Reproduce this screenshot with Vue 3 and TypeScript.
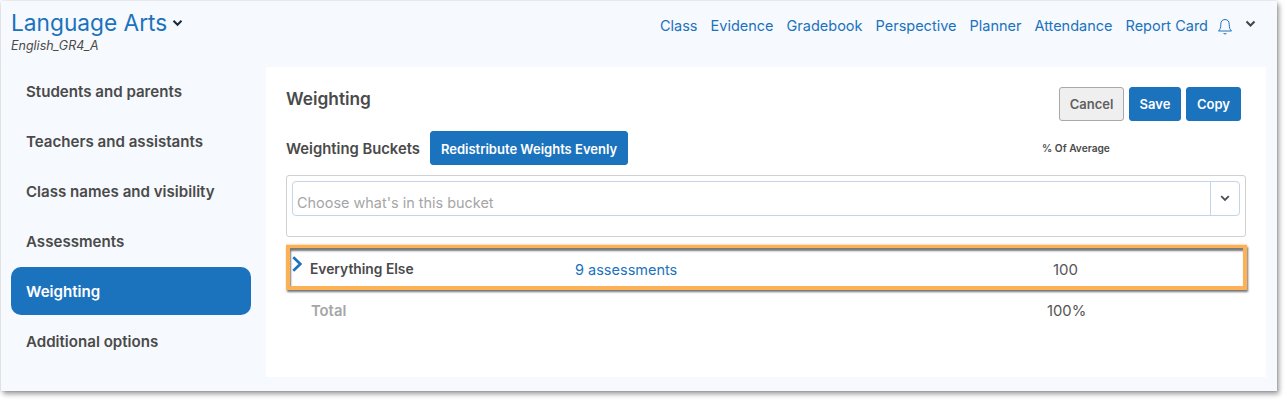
<script setup lang="ts">
const navLinks: string[] = ['Class', 'Evidence', 'Gradebook', 'Perspective', 'Planner', 'Attendance', 'Report Card']
const sideItems: string[] = ['Students and parents', 'Teachers and assistants', 'Class names and visibility', 'Assessments', 'Weighting', 'Additional options']
</script>

<template>
  <div class="stage">
    <div class="window">
      <header class="top">
        <div class="title-block">
          <div class="title-line">
            <span class="title">Language Arts</span>
            <svg class="title-caret" width="11" height="8" viewBox="0 0 11 8"><path d="M1.500 1.800 5.500 5.800 9.500 1.800" fill="none" stroke="#1b2a3a" stroke-width="2"/></svg>
          </div>
          <div class="subtitle">English_GR4_A</div>
        </div>
        <nav class="nav">
          <a v-for="l in navLinks" :key="l" class="nav-link">{{ l }}</a>
          <svg class="bell" width="16" height="18" viewBox="0 0 16 18"><path d="M8 1.500C5.200 1.500 3.800 3.600 3.800 6.300c0 3.600-.8 5.200-2.300 6.700h13c-1.500-1.500-2.300-3.100-2.300-6.700C12.200 3.600 10.800 1.500 8 1.500ZM6.500 15c.3 1.300 2.700 1.300 3 0" fill="none" stroke="#1b72bd" stroke-width="1"/></svg>
          <svg class="nav-caret" width="11" height="8" viewBox="0 0 11 8"><path d="M1.500 1.500 5.500 5.500 9.500 1.500" fill="none" stroke="#3d4650" stroke-width="2"/></svg>
        </nav>
      </header>
      <div class="body">
        <aside class="side">
          <div v-for="s in sideItems" :key="s" class="side-item" :class="{ active: s === 'Weighting' }">{{ s }}</div>
        </aside>
        <main class="panel">
          <div class="panel-head">
            <h1 class="heading">Weighting</h1>
            <div class="actions">
              <button class="btn cancel">Cancel</button>
              <button class="btn primary save">Save</button>
              <button class="btn primary copy">Copy</button>
            </div>
          </div>
          <div class="bucket-head">
            <span class="bucket-label">Weighting Buckets</span>
            <button class="btn primary redistribute">Redistribute Weights Evenly</button>
            <span class="pct-head">% Of Average</span>
          </div>
          <div class="chooser">
            <div class="select">
              <span class="placeholder">Choose what's in this bucket</span>
              <span class="select-btn">
                <svg width="10" height="7" viewBox="0 0 10 7"><path d="M1.200 1.200 5 5 8.800 1.200" fill="none" stroke="#4a4f55" stroke-width="1.800"/></svg>
              </span>
            </div>
          </div>
          <div class="row highlighted">
            <svg class="chevron" width="10" height="16" viewBox="0 0 10 16"><path d="M1.300 1.200 8.300 8 1.300 14.800" fill="none" stroke="#1b72bd" stroke-width="2.600"/></svg>
            <span class="row-name">Everything Else</span>
            <a class="row-link">9 assessments</a>
            <span class="row-num">100</span>
          </div>
          <div class="row total">
            <span class="total-name">Total</span>
            <span class="total-num">100%</span>
          </div>
        </main>
      </div>
    </div>
  </div>
</template>

<style>
html, body { margin: 0; background: #fff; }
</style>

<style scoped>
.stage {
  width: 1287px;
  height: 402px;
  box-sizing: border-box;
  padding: 1px 0 0 1px;
  overflow: hidden;
  font-family: Inter, "Liberation Sans", sans-serif;
  color: #4a4a4a;
}
.window {
  width: 1276px;
  height: 390px;
  box-sizing: border-box;
  background: #f6f9fd;
  box-shadow: 2px 3px 5px rgba(0, 0, 0, 0.4), 0 0 1px rgba(0, 0, 0, 0.3);
  display: flex;
  flex-direction: column;
}
.top {
  height: 66px;
  box-sizing: border-box;
  display: flex;
  justify-content: space-between;
  padding: 0 21px 0 10px;
}
.title-line { display: flex; align-items: center; gap: 5px; height: 42px; padding-top: 2px; box-sizing: border-box; }
.title { font-size: 22.700px; color: #1b72bd; line-height: 28px; }
.subtitle { font-size: 12.500px; font-style: italic; color: #4a4a4a; line-height: 12px; margin-top: -3px; }
.nav { display: flex; align-items: flex-start; gap: 13px; padding-top: 16px; }
.nav-link { font-size: 14.500px; line-height: 18px; color: #1b72bd; }
.bell { margin: 1px 0 0 -4px; }
.nav-caret { margin: 3px 0 0 -1px; }
.body { flex: 1; display: flex; min-height: 0; padding-bottom: 14px; }
.side {
  width: 240px;
  margin: 0 15px 0 10px;
  display: flex;
  flex-direction: column;
  gap: 2px;
}
.side-item {
  height: 48px;
  line-height: 49px;
  padding-left: 15px;
  border-radius: 10px;
  font-size: 15.100px;
  font-weight: 600;
  color: #4a4a4a;
}
.side-item.active { background: #1b72bd; color: #fff; }
.panel {
  width: 1000px;
  background: #fff;
  box-sizing: border-box;
  padding: 20px 20px 0;
}
.panel-head { display: flex; justify-content: space-between; align-items: flex-start; height: 44px; padding-right: 5px; }
.heading { margin: 0; font-size: 17.300px; font-weight: 600; line-height: 23px; color: #4a4a4a; }
.actions { display: flex; gap: 5px; }
.btn {
  font-family: inherit;
  font-size: 13px;
  font-weight: 600;
  height: 34px;
  border-radius: 3px;
  box-sizing: border-box;
  border: 1px solid #1b72bd;
  padding: 0;
}
.primary { background: #1b72bd; color: #fff; }
.cancel { width: 65px; background: #efefef; border-color: #a8a8a8; color: #5f5f5f; }
.save { width: 52px; }
.copy { width: 55px; }
.bucket-head { display: flex; align-items: center; height: 34px; }
.bucket-label { font-size: 14.800px; font-weight: 600; width: 144px; padding-top: 2px; }
.redistribute { width: 198px; padding-top: 1px; }
.pct-head { font-size: 10.200px; font-weight: 600; margin-left: 414px; color: #4a4a4a; }
.chooser {
  margin-top: 10px;
  height: 62px;
  border: 1px solid #d0d0d0;
  border-radius: 3px;
  box-sizing: border-box;
  padding: 5px;
}
.select {
  height: 35px;
  box-sizing: border-box;
  border: 1px solid #c4d5e6;
  border-radius: 4px;
  display: flex;
  align-items: center;
  justify-content: space-between;
}
.placeholder { font-size: 14.450px; color: #a6a6a6; padding-left: 4px; padding-top: 8px; }
.select-btn {
  width: 28px;
  height: 100%;
  border-left: 1px solid #c4d5e6;
  display: flex;
  align-items: center;
  justify-content: center;
}
.row { display: flex; align-items: center; position: relative; }
.highlighted {
  margin: 8px 0 0;
  width: 961px;
  height: 45px;
  box-sizing: border-box;
  padding-top: 4px;
  border: 4px solid #fdb156;
  border-top-width: 3px;
  box-shadow: inset 1px 3px 2px #7a7a7a, 1px 2px 2px rgba(0, 0, 0, 0.55), 0 -1px 1px rgba(253, 177, 86, 0.35);
}
.chevron { position: absolute; left: 2px; top: 8px; }
.row-name { margin-left: 20px; width: 265px; font-size: 13.800px; font-weight: 600; color: #4a4a4a; }
.row-link { width: 478px; font-size: 14.500px; color: #1b72bd; }
.row-num { font-size: 15px; color: #555; }
.total { height: 42px; }
.total-name { margin-left: 25px; width: 736px; font-size: 14.800px; font-weight: 600; color: #a6a6a6; }
.total-num { font-size: 14.800px; color: #555; }
</style>
